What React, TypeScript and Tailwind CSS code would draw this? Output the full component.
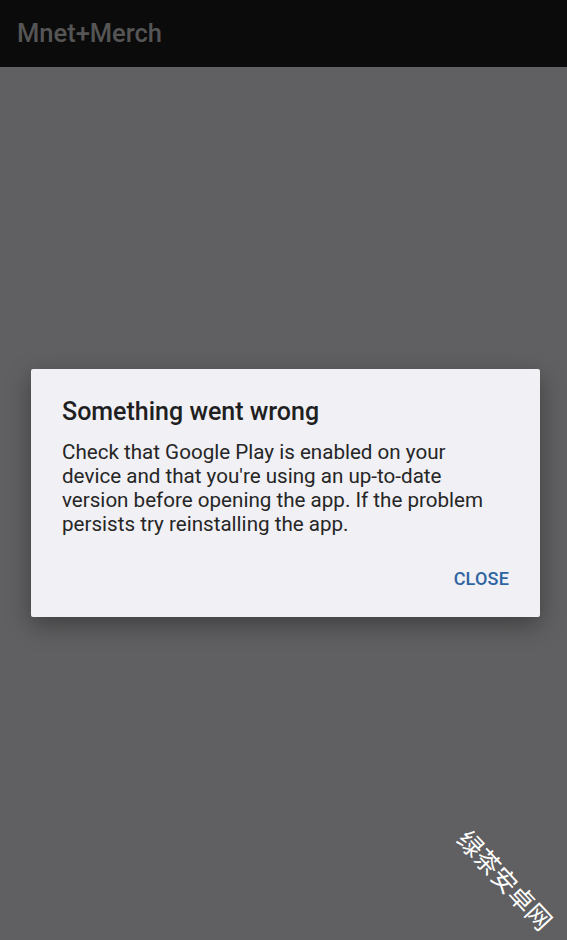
export default function App() {
  return (
    <div
      className="relative flex h-[940px] w-[567px] flex-col overflow-hidden bg-[#606062]"
      style={{ fontFamily: 'Roboto, "Noto Sans", sans-serif' }}
    >
      {/* App bar */}
      <div className="flex h-[67px] shrink-0 items-center bg-[#0b0b0b] px-[17px]">
        <span className="text-[25.5px] font-medium text-[#555555]">Mnet+Merch</span>
      </div>

      {/* Dialog */}
      <div className="flex flex-1 flex-col pt-[302px]">
        <div className="ml-[31px] mr-[27px] flex h-[248px] flex-col rounded-[2px] bg-[#f0f0f5] pl-[31px] pr-[31px] pt-[27px] shadow-[0_8px_24px_rgba(0,0,0,0.35)]">
          <h2 className="text-[25px] font-medium leading-[32px] text-[#1f1f1f]">Something went wrong</h2>
          <p className="mt-[12px] text-[20.6px] leading-[24px] text-[#262626]">
            Check that Google Play is enabled on your device and that you're using an up-to-date version before opening
            the app. If the problem persists try reinstalling the app.
          </p>
          <div className="mt-[29px] flex justify-end">
            <span className="text-[18px] font-medium tracking-[0.2px] text-[#2f64a3]">CLOSE</span>
          </div>
        </div>
      </div>

      {/* Watermark */}
      <div
        className="absolute left-[443px] top-[867px] rotate-[47deg] whitespace-nowrap text-[25px] leading-none text-white"
        style={{ fontFamily: '"Noto Sans CJK SC", sans-serif' }}
      >
        绿茶安卓网
      </div>
    </div>
  )
}
